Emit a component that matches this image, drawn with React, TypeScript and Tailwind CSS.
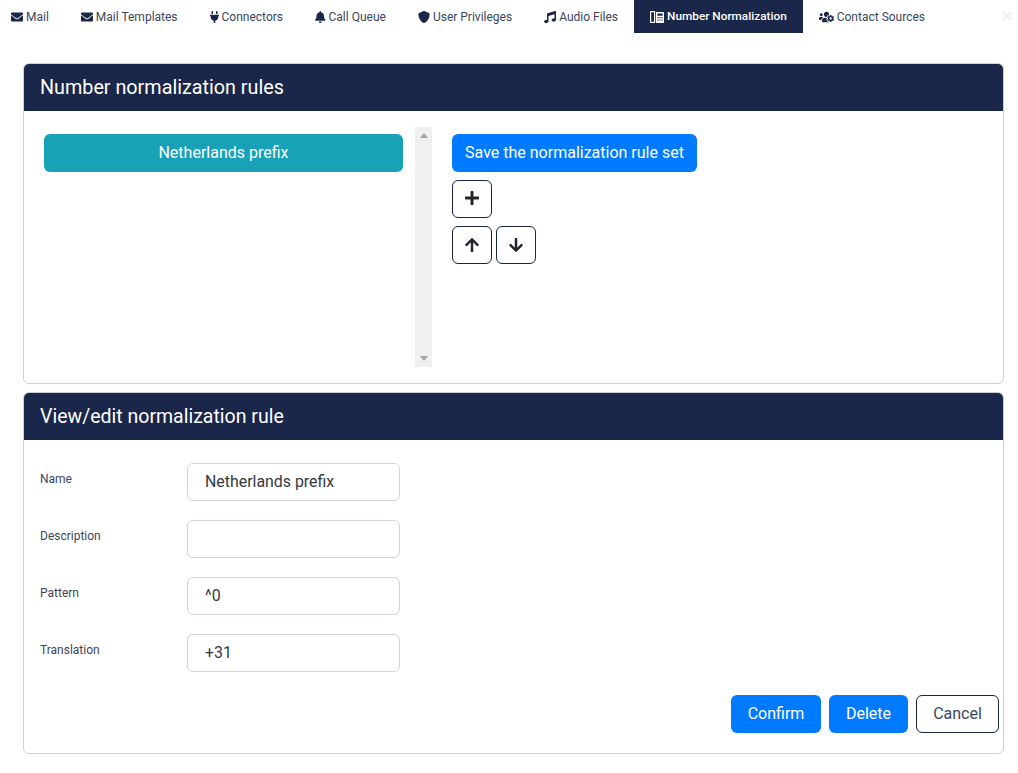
import { FaArrowDown, FaArrowUp, FaBell, FaEnvelope, FaMusic, FaPlug, FaPlus, FaTimes, FaUsersCog } from "react-icons/fa";
import type { ReactNode } from "react";
import type { IconType } from "react-icons";

function ShieldIcon() {
  return (
    <svg viewBox="0 0 512 512" className="h-3 w-3 fill-[#1a264a]">
      <path d="M466.5 83.7l-192-80a48.15 48.15 0 0 0-36.9 0l-192 80C27.7 91.1 16 108.6 16 128c0 198.5 114.5 335.7 221.5 380.3 11.8 4.9 25.1 4.9 36.9 0C360.1 472.6 496 349.3 496 128c0-19.4-11.7-36.9-29.5-44.3z" />
    </svg>
  );
}

// desk phone with handset, not in the icon packages
function PhoneOfficeIcon() {
  return (
    <svg viewBox="0 0 14 12" className="h-3 w-[14px] fill-white">
      <path fillRule="evenodd" d="M0.8 0h3.6c.4 0 .8.4.8.8v10.4c0 .4-.4.8-.8.8H.8c-.4 0-.8-.4-.8-.8V.8C0 .4.4 0 .8 0zM1.2 1.2v9.6h2.8V1.2z" />
      <path fillRule="evenodd" d="M6 1h7c.6 0 1 .4 1 1v9c0 .6-.4 1-1 1H6zM7.4 2.4v2.4h5.2V2.4zM7.4 6v1.2h1.2V6zM9.4 6v1.2h1.2V6zM11.4 6v1.2h1.2V6zM7.4 8.4v1.2h1.2V8.4zM9.4 8.4v1.2h1.2V8.4zM11.4 8.4v1.2h1.2V8.4z" />
    </svg>
  );
}

const iconClass = "h-3 text-[#1a264a]";

const tabs: { label: string; icon: ReactNode; active?: boolean }[] = [
  { label: "Mail", icon: <FaEnvelope className={`${iconClass} w-3`} /> },
  { label: "Mail Templates", icon: <FaEnvelope className={`${iconClass} w-3`} /> },
  { label: "Connectors", icon: <FaPlug className={`${iconClass} w-[9px]`} /> },
  { label: "Call Queue", icon: <FaBell className={`${iconClass} w-[10.5px]`} /> },
  { label: "User Privileges", icon: <ShieldIcon /> },
  { label: "Audio Files", icon: <FaMusic className={`${iconClass} w-3`} /> },
  { label: "Number Normalization", icon: <PhoneOfficeIcon />, active: true },
  { label: "Contact Sources", icon: <FaUsersCog className={`${iconClass} w-[15px]`} /> },
];

const fields = [
  { label: "Name", value: "Netherlands prefix" },
  { label: "Description", value: "" },
  { label: "Pattern", value: "^0" },
  { label: "Translation", value: "+31" },
];

function IconButton({ icon: Icon, className = "" }: { icon: IconType; className?: string }) {
  return (
    <button className={`flex h-[38px] w-10 items-center justify-center rounded-md border border-[#1a264a] bg-white text-[#212529] ${className}`}>
      <Icon className="text-base" />
    </button>
  );
}

export default function App() {
  return (
    <div className="h-[773px] overflow-hidden bg-white font-['Roboto',sans-serif] text-[#212529]">
      <div className="-ml-[5px] flex h-[33px] items-start">
        {tabs.map((tab) => (
          <div
            key={tab.label}
            className={`flex h-[33px] shrink-0 items-center gap-[3px] whitespace-nowrap px-4 ${tab.active ? "bg-[#1a264a] text-[11.8px] font-medium text-white" : "text-xs text-[#3b4560]"}`}
          >
            {tab.icon}
            <span>{tab.label}</span>
          </div>
        ))}
        <FaTimes className="ml-auto mr-[6px] mt-[9px] h-[14px] w-[10px] text-[#f0f0f0]" />
      </div>

      <div className="mx-[23px] mt-[30px] flex w-[981px] flex-col gap-2">
        <section className="h-[321px] overflow-hidden rounded-md border border-[#cfcfcf]">
          <h2 className="flex h-[47px] items-center bg-[#1a264a] px-4 text-[19.75px] font-normal text-white">Number normalization rules</h2>
          <div className="flex pl-5 pt-[16px]">
            <div className="w-[359px] pt-[7px]">
              <div className="flex h-[38px] items-center justify-center rounded-md bg-[#17a2b8] text-base font-normal text-white">Netherlands prefix</div>
            </div>
            <div className="ml-3 flex h-[240px] w-[17px] flex-col items-center justify-between bg-[#f0f0f0] py-[6px]">
              <div className="h-0 w-0 border-x-[4px] border-b-[5px] border-x-transparent border-b-[#a3a3a3]" />
              <div className="h-0 w-0 border-x-[4px] border-t-[5px] border-x-transparent border-t-[#a3a3a3]" />
            </div>
            <div className="ml-5 flex flex-col gap-2 pt-[7px]">
              <button className="h-[38px] w-[245px] rounded-md bg-[#007bff] text-base text-white">Save the normalization rule set</button>
              <IconButton icon={FaPlus} className="pb-[2px]" />
              <div className="flex gap-1">
                <IconButton icon={FaArrowUp} />
                <IconButton icon={FaArrowDown} />
              </div>
            </div>
          </div>
        </section>

        <section className="h-[362px] overflow-hidden rounded-md border border-[#cfcfcf]">
          <h2 className="flex h-[47px] items-center bg-[#1a264a] px-4 text-[19.5px] font-normal text-white">View/edit normalization rule</h2>
          <div className="flex flex-col gap-[19px] pl-4 pt-[23px]">
            {fields.map((field) => (
              <div key={field.label} className="flex items-start">
                <label className="w-[147px] pt-[8px] text-xs text-[#3b4560]">{field.label}</label>
                <input
                  readOnly
                  value={field.value}
                  className="h-[38px] w-[213px] rounded-md border border-[#ced4da] bg-white px-[17px] pb-[2px] text-[15.9px] text-[#343a40]"
                />
              </div>
            ))}
          </div>
          <div className="mt-[23px] flex justify-end gap-2 pr-1">
            <button className="h-[38px] w-[90px] rounded-md bg-[#007bff] text-base text-white">Confirm</button>
            <button className="h-[38px] w-[79px] rounded-md bg-[#007bff] text-base text-white">Delete</button>
            <button className="h-[38px] w-[83px] rounded-md border border-[#1a264a] bg-white text-base text-[#3b4560]">Cancel</button>
          </div>
        </section>
      </div>
    </div>
  );
}
